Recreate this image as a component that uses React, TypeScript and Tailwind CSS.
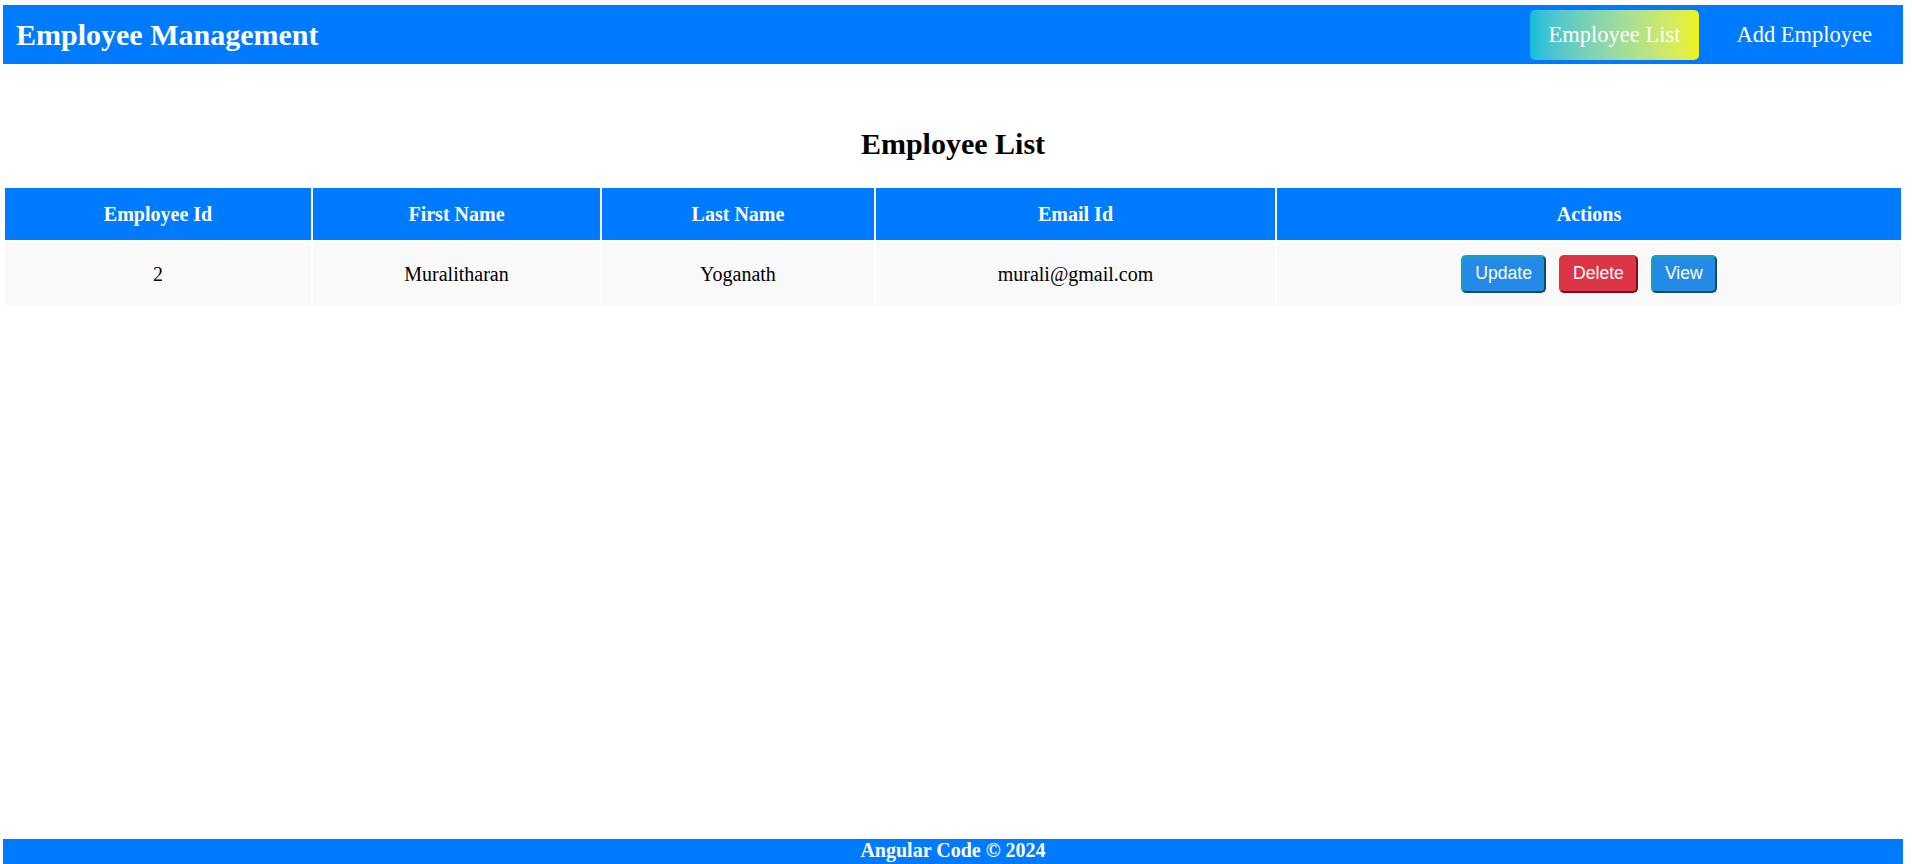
const employees = [
  { id: 2, firstName: 'Muralitharan', lastName: 'Yoganath', email: 'murali@gmail.com' },
];

function ActionButtons() {
  return (
    <div className="flex items-center justify-center gap-[13px] font-['Liberation_Sans',Arial,sans-serif] text-[17.6px] text-white">
      <button className="h-[38px] rounded-[5px] border-2 border-t-[#17a2b8] border-l-[#17a2b8] border-b-[#0c4f55] border-r-[#0c4f55] bg-[#238ae8] px-[12px] leading-none">
        Update
      </button>
      <button className="h-[38px] rounded-[5px] border-2 border-t-[#dc3545] border-l-[#dc3545] border-b-[#850b1c] border-r-[#850b1c] bg-[#dc3545] px-[12px] leading-none">
        Delete
      </button>
      <button className="h-[38px] rounded-[5px] border-2 border-t-[#17a2b8] border-l-[#17a2b8] border-b-[#0c4f55] border-r-[#0c4f55] bg-[#238ae8] px-[12px] leading-none">
        View
      </button>
    </div>
  );
}

export default function App() {
  return (
    <div className="flex h-screen flex-col bg-white pl-[3px] pr-[9px] pt-[5px] font-['Liberation_Serif','Times_New_Roman',serif] text-black">
      <header className="flex h-[59px] items-center justify-between bg-[#007bff] pl-[13px] pr-[12px]">
        <h1 className="pt-[1px] text-[30px] font-bold leading-[34px] text-white">Employee Management</h1>
        <nav className="flex items-center gap-[18px] text-[22.5px] text-white">
          <a className="flex h-[50px] items-center rounded-[5px] bg-linear-to-r from-[#0bbcdc] to-[#eef20a] px-[19px]">
            Employee List
          </a>
          <a className="px-[19px]">Add Employee</a>
        </nav>
      </header>

      <main className="flex-1">
        <h2 className="mt-[63px] mb-[25px] text-center text-[30px] font-bold leading-[34px]">Employee List</h2>
        <table className="w-full table-fixed border-separate border-spacing-[2px] text-[20px]">
          <thead>
            <tr className="bg-[#007bff] text-white">
              <th className="h-[52px] w-[306px] text-center align-middle font-bold">Employee Id</th>
              <th className="h-[52px] w-[287px] text-center align-middle font-bold">First Name</th>
              <th className="h-[52px] w-[272px] text-center align-middle font-bold">Last Name</th>
              <th className="h-[52px] w-[399px] text-center align-middle font-bold">Email Id</th>
              <th className="h-[52px] text-center align-middle font-bold">Actions</th>
            </tr>
          </thead>
          <tbody>
            {employees.map((e) => (
              <tr key={e.id} className="bg-[#f9f9f9]">
                <td className="h-[63px] text-center align-middle">{e.id}</td>
                <td className="h-[63px] text-center align-middle">{e.firstName}</td>
                <td className="h-[63px] text-center align-middle">{e.lastName}</td>
                <td className="h-[63px] text-center align-middle">{e.email}</td>
                <td className="h-[63px] text-center align-middle">
                  <ActionButtons />
                </td>
              </tr>
            ))}
          </tbody>
        </table>
      </main>

      <footer className="h-[25px] shrink-0 bg-[#007bff] text-center text-[20px] font-bold leading-[23px] text-white">
        Angular Code © 2024
      </footer>
    </div>
  );
}
